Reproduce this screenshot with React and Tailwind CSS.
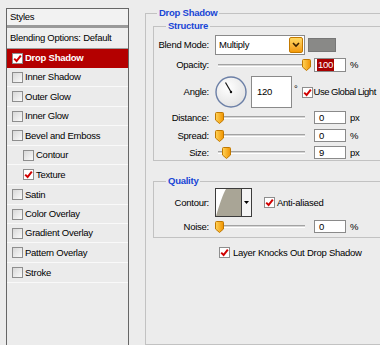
import React from "react";

const styles = [
  { t: "Drop Shadow", c: true, sel: true, h: 19 },
  { t: "Inner Shadow", h: 19 },
  { t: "Outer Glow", h: 20 },
  { t: "Inner Glow", h: 19 },
  { t: "Bevel and Emboss", h: 20 },
  { t: "Contour", ind: true, h: 19 },
  { t: "Texture", ind: true, c: true, h: 20 },
  { t: "Satin", h: 20 },
  { t: "Color Overlay", h: 19 },
  { t: "Gradient Overlay", h: 19 },
  { t: "Pattern Overlay", h: 20 },
  { t: "Stroke", h: 20 },
];

function Check({ checked, className = "" }) {
  return (
    <span
      className={
        "flex h-[11px] w-[11px] shrink-0 items-center justify-center border border-[#8e8e8e] " +
        (checked ? "bg-white " : "bg-gradient-to-br from-[#d8d8d8] to-[#fafafa] ") +
        className
      }
    >
      {checked && (
        <svg width="9" height="9" viewBox="0 0 9 9">
          <path d="M1.2 4.6 L3.6 7 L7.8 1.6" stroke="#d00000" strokeWidth="2" fill="none" />
        </svg>
      )}
    </span>
  );
}

function Thumb() {
  return (
    <svg width="9" height="12" viewBox="0 0 9 12">
      <defs>
        <linearGradient id="thumbGrad" x1="0" x2="1" y1="0" y2="0">
          <stop offset="0" stopColor="#ffd45a" />
          <stop offset="1" stopColor="#f09300" />
        </linearGradient>
      </defs>
      <path
        d="M1.5 .5 H7.5 A1 1 0 0 1 8.5 1.5 V8 L4.5 11.5 L.5 8 V1.5 A1 1 0 0 1 1.5 .5Z"
        fill="url(#thumbGrad)"
        stroke="#c07800"
      />
    </svg>
  );
}

function Slider({ thumb }) {
  return (
    <div className="relative flex h-full w-[95px] shrink-0 items-center pl-[3px]">
      <div className="h-[3px] w-[87px] border-t border-b border-t-[#a3a3a3] border-b-white bg-[#d6d6d6]" />
      <div className={"absolute top-1/2 -translate-y-1/2 " + thumb}>
        <Thumb />
      </div>
    </div>
  );
}

function Field({ children, className = "" }) {
  return (
    <div className={"flex h-full items-center border border-[#8a8a8a] bg-white " + className}>
      {children}
    </div>
  );
}

function Label({ children }) {
  return <div className="w-[56px] shrink-0 pr-[1px] text-right">{children}</div>;
}

function SliderRow({ label, value, unit, thumb, className }) {
  return (
    <div className={"flex items-center " + className}>
      <Label>{label}</Label>
      <div className="ml-[5px] flex h-full items-center">
        <Slider thumb={thumb} />
        <Field className="ml-[4px] w-[32px] pl-[4px]">{value}</Field>
        <span className="ml-[4px]">{unit}</span>
      </div>
    </div>
  );
}

export default function App() {
  return (
    <div className="flex h-[345px] w-[380px] overflow-hidden bg-[#ececec] font-['Liberation_Sans',Arial,sans-serif] text-[9.5px] leading-[12px] tracking-[-0.25px] text-black">
      {/* styles list */}
      <aside className="ml-[6px] mt-[8px] h-[345px] w-[123px] shrink-0 border border-b-0 border-[#666]">
        <div className="flex h-[19px] items-center border-b-[3px] border-b-[#9a9a9a] bg-[#f2f2f2] pl-[3px]">
          Styles
        </div>
        <div className="flex h-[21px] items-center border-b border-b-[#9c9c9c] bg-[#efefef] pl-[3px]">
          Blending Options: Default
        </div>
        {styles.map((s) => (
          <div
            key={s.t}
            className={
              "flex items-center border-b " +
              (s.h === 20 ? "h-[20px] " : "h-[19px] ") +
              (s.sel
                ? "border-b-[#b40000] bg-[#b40000] font-bold text-white "
                : "border-b-[#f9f9f9] bg-[#ebebeb] ") +
              (s.ind ? "pl-[16px]" : "pl-[5px]")
            }
          >
            <Check checked={s.c} />
            <span className="ml-[2px]">{s.t}</span>
          </div>
        ))}
      </aside>

      {/* drop shadow settings */}
      <fieldset className="ml-[16px] mt-[7px] h-[338px] w-[250px] shrink-0 border border-[#c2c2c2]">
        <legend className="ml-[11px] px-[2px] font-bold leading-[12px] text-[#1846d6]">Drop Shadow</legend>

        <fieldset className="ml-[7px] mt-[1px] w-[236px] border border-[#c2c2c2] pb-[1px]">
          <legend className="ml-[12px] px-[2px] font-bold leading-[12px] text-[#1846d6]">Structure</legend>

          <div className="mt-[3px] flex h-[20px] items-center">
            <Label>Blend Mode:</Label>
            <div className="ml-[5px] flex h-full w-[90px] items-center justify-between border border-[#8a8a8a] bg-white pl-[3px] pr-[1px]">
              <span>Multiply</span>
              <span className="flex h-[16px] w-[14px] items-center justify-center rounded-[2px] border border-[#c47a00] bg-gradient-to-b from-[#ffd860] to-[#f39a00]">
                <svg width="8" height="6" viewBox="0 0 8 6">
                  <path d="M1 1 L4 4 L7 1" stroke="#3a2000" strokeWidth="1.6" fill="none" />
                </svg>
              </span>
            </div>
            <div className="ml-[3px] h-[14px] w-[28px] border border-[#777] bg-[#898987]" />
          </div>

          <div className="mt-[3px] flex h-[14px] items-center">
            <Label>Opacity:</Label>
            <div className="ml-[5px] flex h-full items-center">
              <Slider thumb="left-[87px]" />
              <Field className="ml-[4px] w-[32px] pl-[2px]">
                <span className="bg-[#a80000] px-[1px] text-white">100</span>
              </Field>
              <span className="ml-[4px]">%</span>
            </div>
          </div>

          <div className="mt-[4px] flex h-[32px] items-center">
            <Label>Angle:</Label>
            <div className="ml-[5px] flex h-full items-center">
              <svg width="32" height="32" viewBox="0 0 32 32">
                <defs>
                  <radialGradient id="dialGrad" cx="0.4" cy="0.35" r="0.7">
                    <stop offset="0" stopColor="#ffffff" />
                    <stop offset="1" stopColor="#e2e2e2" />
                  </radialGradient>
                </defs>
                <circle cx="16" cy="16" r="15" fill="url(#dialGrad)" stroke="#6b7fa6" strokeWidth="1.4" />
                <line x1="16" y1="16" x2="10.5" y2="6.5" stroke="#111" strokeWidth="1.2" />
                <circle cx="16" cy="16" r="1.2" fill="#111" />
              </svg>
              <Field className="ml-[4px] h-[15px] w-[41px] pl-[5px]">120</Field>
              <span className="ml-[2px] self-start pt-[7px]">°</span>
              <Check checked className="ml-[4px]" />
              <span className="ml-[1px] whitespace-nowrap tracking-[-0.5px]">Use Global Light</span>
            </div>
          </div>

          <SliderRow className="mt-[3px] h-[13px]" label="Distance:" value="0" unit="px" thumb="left-[0px]" />
          <SliderRow className="mt-[5px] h-[13px]" label="Spread:" value="0" unit="%" thumb="left-[0px]" />
          <SliderRow className="mt-[4px] h-[13px]" label="Size:" value="9" unit="px" thumb="left-[7px]" />
        </fieldset>

        <fieldset className="ml-[7px] mt-[14px] w-[236px] border border-[#c2c2c2] pb-[4px]">
          <legend className="ml-[12px] px-[2px] font-bold leading-[12px] text-[#1846d6]">Quality</legend>

          <div className="mt-[1px] flex h-[29px] items-center">
            <Label>Contour:</Label>
            <div className="ml-[5px] flex h-full w-[37px] border border-[#3c3c3c] bg-white">
              <svg width="25" height="27" viewBox="0 0 25 27" className="shrink-0">
                <path d="M0 27 C4 14 7 5 10 0 L25 0 L25 27 Z" fill="#a9a596" />
              </svg>
              <div className="flex flex-1 items-center justify-center border-l border-[#3c3c3c] bg-[#f4f4f4]">
                <svg width="5" height="3" viewBox="0 0 5 3">
                  <path d="M0 0 H5 L2.5 3 Z" fill="#000" />
                </svg>
              </div>
            </div>
            <Check checked className="ml-[12px]" />
            <span className="ml-[2px]">Anti-aliased</span>
          </div>

          <SliderRow className="mt-[3px] h-[13px]" label="Noise:" value="0" unit="%" thumb="left-[0px]" />
        </fieldset>

        <div className="ml-[73px] mt-[9px] flex h-[11px] items-center">
          <Check checked />
          <span className="ml-[3px] whitespace-nowrap">Layer Knocks Out Drop Shadow</span>
        </div>
      </fieldset>
    </div>
  );
}
